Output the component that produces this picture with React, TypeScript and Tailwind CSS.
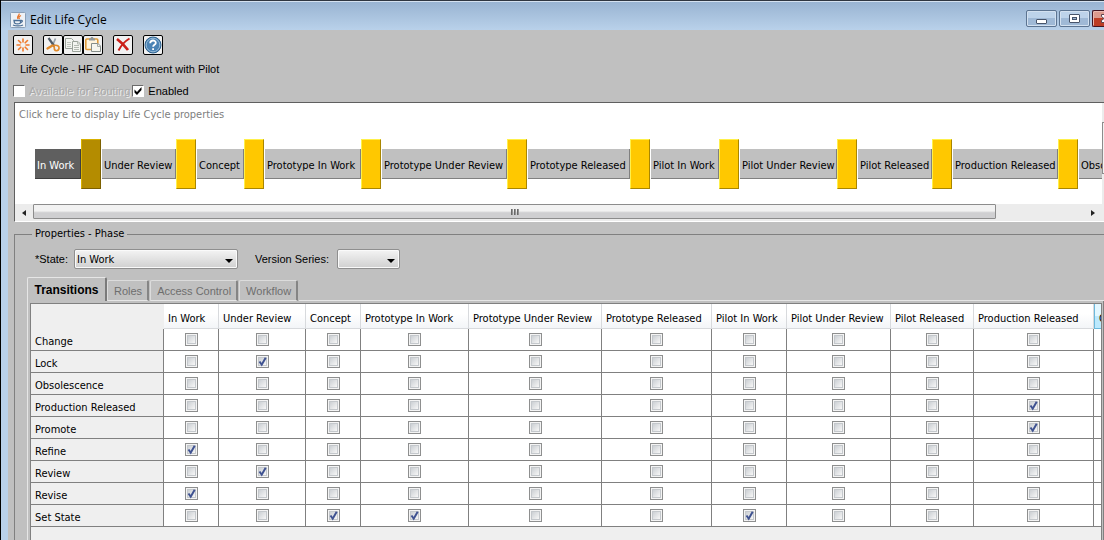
import { useState } from 'react'
import type { ReactNode } from 'react'

const phases = [
  { name: 'In Work', box: 'w-[46px]', col: 'w-[55px]' },
  { name: 'Under Review', box: 'w-[74px]', col: 'w-[87px]' },
  { name: 'Concept', box: 'w-[47px]', col: 'w-[55px]' },
  { name: 'Prototype In Work', box: 'w-[96px]', col: 'w-[108px]' },
  { name: 'Prototype Under Review', box: 'w-[125px]', col: 'w-[133px]' },
  { name: 'Prototype Released', box: 'w-[102px]', col: 'w-[110px]' },
  { name: 'Pilot In Work', box: 'w-[68px]', col: 'w-[75px]' },
  { name: 'Pilot Under Review', box: 'w-[97px]', col: 'w-[104px]' },
  { name: 'Pilot Released', box: 'w-[74px]', col: 'w-[83px]' },
  { name: 'Production Released', box: 'w-[105px]', col: 'w-[120px]' },
  { name: 'Obsolescence', box: 'w-[80px]', col: 'w-[90px]' },
]

const transitions: { name: string; to: string[] }[] = [
  { name: 'Change', to: [] },
  { name: 'Lock', to: ['Under Review'] },
  { name: 'Obsolescence', to: [] },
  { name: 'Production Released', to: ['Production Released'] },
  { name: 'Promote', to: ['Production Released'] },
  { name: 'Refine', to: ['In Work'] },
  { name: 'Review', to: ['Under Review'] },
  { name: 'Revise', to: ['In Work'] },
  { name: 'Set State', to: ['Concept', 'Prototype In Work', 'Pilot In Work'] },
]

const tabs = ['Transitions', 'Roles', 'Access Control', 'Workflow']

function JavaIcon() {
  return (
    <svg width="16" height="16" viewBox="0 0 16 16" fill="none">
      <rect x="0.5" y="0.5" width="15" height="15" rx="1" fill="#eef2f6" stroke="#8aa0b8" />
      <path d="M9 1.500c1.200 2-3 2.800-1.200 5.500M11 3.500c-2.200 1-2.700 2-1.500 3.500" stroke="#e8772e" strokeWidth="1.300" />
      <path d="M4 8.500h6.500v2.500c-1.500 1-4.500 1-6 0zM10.500 8.500c3-.5 2 2.200-.5 2.200M3 13c2.500 1.200 7.500 1.200 10 0" stroke="#4b6f96" strokeWidth="1.300" />
    </svg>
  )
}

function NewIcon() {
  return (
    <svg width="18" height="18" viewBox="0 0 18 18" stroke="#f07b2c" strokeWidth="1.600" strokeLinecap="round">
      <path d="M9 3v3M9 12v3M3 9h3M12 9h3M4.500 4.500l2.300 2.300M11.200 11.200l2.300 2.300M4.500 13.500l2.300-2.300M11.200 6.800l2.300-2.300" />
    </svg>
  )
}

function CutIcon() {
  return (
    <svg width="18" height="18" viewBox="0 0 18 18" fill="none">
      <path d="M11.500 2.500L8.500 9.500" stroke="#9aa5ae" strokeWidth="1.800" />
      <path d="M4.500 2l6 8.500" stroke="#4f5c69" strokeWidth="2.200" />
      <path d="M8.500 9.500l-5 3" stroke="#e08a2c" strokeWidth="2.400" strokeLinecap="round" />
      <path d="M10 9.500c3-.8 5.500.5 5 3s-3.500 3-4.500 1z" stroke="#e08a2c" strokeWidth="1.700" />
    </svg>
  )
}

function CopyIcon() {
  return (
    <svg width="18" height="18" viewBox="0 0 18 18" stroke="#9aa29a">
      <path d="M1.500 2.500h6l2 2v8h-8z" fill="#f3f5f1" />
      <path d="M3 6.500h4M3 8.500h4M3 10.500h4" stroke="#c0c6be" />
      <path d="M8.500 5.500h5.500l2.500 2.500v7.500h-8z" fill="#f3f5f1" />
      <path d="M13.500 5.500v2.500h3M10 9.500h5M10 11.500h5M10 13.500h5" stroke="#b4bab2" fill="none" />
    </svg>
  )
}

function PasteIcon() {
  return (
    <svg width="18" height="18" viewBox="0 0 18 18">
      <rect x="1.800" y="3" width="12" height="10.500" rx="1" fill="#fff4dc" stroke="#df9a38" strokeWidth="1.600" />
      <path d="M5 4.500v-2h1.500l.5-1.500h2l.5 1.500h1.500v2z" fill="#8f979c" />
      <path d="M7.500 7.500h6.500l2.500 2.500v5.500h-9z" fill="#f6f6ee" stroke="#858d89" />
      <path d="M13.500 7.500v3h3" fill="none" stroke="#a5aba5" />
    </svg>
  )
}

function DeleteIcon() {
  return (
    <svg width="18" height="18" viewBox="0 0 18 18" fill="none" stroke="#cb1f18">
      <path d="M3 3c4 3 7.500 6.500 11 11" strokeWidth="2.800" />
      <path d="M15.500 2.500c-5 3-8.500 7-11 12" strokeWidth="2" />
    </svg>
  )
}

function HelpIcon() {
  return (
    <svg width="18" height="18" viewBox="0 0 18 18" fill="none">
      <circle cx="9" cy="9" r="8" fill="#4a83b5" stroke="#2f638f" />
      <circle cx="9" cy="9" r="6.800" stroke="#a9c6de" strokeWidth="0.800" />
      <path d="M6.200 7.200c.1-3.600 5.600-3.500 5.600-.3 0 1.900-2.700 1.900-2.700 3.900M9.100 12.200v1.900" stroke="#fff" strokeWidth="1.800" />
    </svg>
  )
}

function ToolButton({ label, children }: { label: string; children: ReactNode }) {
  return (
    <button
      type="button"
      aria-label={label}
      title={label}
      className="flex size-5 items-center justify-center overflow-hidden rounded-[2px] border border-black bg-[#f1f1f1]"
    >
      {children}
    </button>
  )
}

function CaptionButton({ label, children }: { label: string; children: ReactNode }) {
  return (
    <button
      type="button"
      aria-label={label}
      className="flex h-[17px] w-[31px] items-center justify-center rounded-[2px] border border-[#5c7491] bg-linear-to-b from-[#bdd3ea] from-50% to-[#9fb9d6] to-50% shadow-[inset_0_0_0_1px_#d3e1f0]"
    >
      {children}
    </button>
  )
}

function TitleBar() {
  return (
    <header className="flex h-[30px] justify-between border-t border-[#2f3640] bg-linear-to-b from-[#98b3d1] to-[#b9d1ea] shadow-[inset_0_1px_0_#d5e2f0]">
      <div className="flex items-center gap-1 pt-2 pl-[9px]">
        <JavaIcon />
        <h1 className="font-['Open_Sans','Noto_Sans',sans-serif] text-[12px] leading-4 text-black">Edit Life Cycle</h1>
      </div>
      <div className="flex gap-[2px] pt-[9px]">
        <CaptionButton label="Minimize">
          <svg width="12" height="6" viewBox="0 0 12 6" className="mt-1">
            <rect x="0.5" y="1.500" width="10" height="4" rx="0.500" fill="#fff" stroke="#47546a" />
          </svg>
        </CaptionButton>
        <CaptionButton label="Maximize">
          <svg width="11" height="9" viewBox="0 0 11 9">
            <rect x="0.500" y="0.500" width="10" height="8" rx="0.500" fill="#fff" stroke="#47546a" />
            <rect x="3.500" y="3.500" width="4" height="2" fill="#9db6d2" stroke="#47546a" />
          </svg>
        </CaptionButton>
        <button
          type="button"
          aria-label="Close"
          className="flex h-[17px] w-3 items-center justify-end overflow-hidden rounded-l-[2px] border border-r-0 border-[#431422] bg-linear-to-b from-[#dc9a8e] from-50% to-[#bd3d25] to-50% shadow-[inset_1px_1px_0_#e9b9b0]"
        >
          <svg width="3" height="9" viewBox="0 0 3 9" className="flex-none">
            <path d="M3 .5h-2.500v2l2.500 2M3 8.500h-2.500v-2l2.500-2" fill="#fff" stroke="#5b4350" />
          </svg>
        </button>
      </div>
    </header>
  )
}

function ClassicCheckbox({
  label,
  checked,
  disabled,
  onChange,
}: {
  label: string
  checked: boolean
  disabled?: boolean
  onChange: () => void
}) {
  return (
    <label className="flex items-center gap-1">
      <span className="grid">
        <input
          type="checkbox"
          checked={checked}
          disabled={disabled}
          onChange={onChange}
          className="col-start-1 row-start-1 size-3 appearance-none border border-t-[#6b6b6b] border-r-white border-b-white border-l-[#6b6b6b] bg-white"
        />
        {checked && (
          <svg width="12" height="12" viewBox="0 0 12 12" className="pointer-events-none col-start-1 row-start-1">
            <path d="M2.500 4.500v3l2.500 2.500 4.500-5v-3l-4.500 5z" fill="#000" />
          </svg>
        )}
      </span>
      <span className={disabled ? 'text-[#a9a9a9] [text-shadow:1px_1px_0_#ececec]' : 'text-black'}>{label}</span>
    </label>
  )
}

function GridCheckbox({ label, checked, onChange }: { label: string; checked: boolean; onChange: () => void }) {
  return (
    <span className="grid justify-center">
      <input
        type="checkbox"
        aria-label={label}
        checked={checked}
        onChange={onChange}
        className="col-start-1 row-start-1 size-[13px] appearance-none border border-[#8e8f8f] bg-linear-to-br from-[#cdd1d5] from-20% to-[#f6f6f6] to-80% shadow-[inset_0_0_0_1px_#f4f4f4,inset_0_0_0_2px_#c4c8cc]"
      />
      {checked && (
        <svg width="13" height="13" viewBox="0 0 13 13" className="pointer-events-none col-start-1 row-start-1">
          <path d="M3.500 6.500l2.200 3.200 4-7" fill="none" stroke="#3f5291" strokeWidth="2" />
        </svg>
      )}
    </span>
  )
}

function DropDown({ id, className, children }: { id: string; className: string; children: ReactNode }) {
  return (
    <span className={`grid items-center ${className}`}>
      <select
        id={id}
        className="col-start-1 row-start-1 h-5 w-full appearance-none rounded-[2px] border border-[#8f8f8f] bg-linear-to-b from-[#f4f4f4] to-[#d0d0d0] pt-[2px] pl-[2px] font-['DejaVu_Sans_Condensed','DejaVu_Sans',sans-serif] text-[11px] leading-4 shadow-[inset_0_0_0_1px_#fafafa]"
      >
        {children}
      </select>
      <svg
        width="8"
        height="4"
        viewBox="0 0 8 4"
        className="pointer-events-none col-start-1 row-start-1 mt-1 mr-[5px] justify-self-end"
      >
        <path d="M0 0h8L4 4z" fill="#000" />
      </svg>
    </span>
  )
}

function PhaseStrip({ selected, onSelect }: { selected: string; onSelect: (name: string) => void }) {
  return (
    <div className="flex items-center pl-5">
      {phases.map((phase) => {
        const active = phase.name === selected
        return (
          <div key={phase.name} className="flex flex-none items-center">
            <button
              type="button"
              onClick={() => onSelect(phase.name)}
              className={`h-[30px] border-r border-b pt-1 pl-[2px] text-left whitespace-nowrap ${phase.box} ${
                active ? 'border-[#3f3f3f] bg-[#5f5f5f] text-white' : 'border-[#808080] bg-[#c0c0c0] text-black'
              }`}
            >
              {phase.name}
            </button>
            <span
              className={`mr-px h-[50px] w-5 border ${
                active
                  ? 'border-t-[#d8b000] border-r-[#7c6000] border-b-[#7c6000] border-l-[#d8b000] bg-[#b48c00]'
                  : 'border-t-[#fff04a] border-r-[#a98600] border-b-[#a98600] border-l-[#fff04a] bg-[#ffc800]'
              }`}
            />
          </div>
        )
      })}
    </div>
  )
}

function LifeCyclePanel() {
  const [selected, setSelected] = useState('In Work')
  return (
    <section className="ml-[6px] flex border-t border-b border-l border-[#5f5f5f] border-b-white bg-white">
      <div className="min-w-0 flex-1 overflow-hidden">
        <p className="px-1 pt-1 leading-4 text-[#808080]">Click here to display Life Cycle properties</p>
        <div className="overflow-hidden pt-4 pb-[15px]">
          <PhaseStrip selected={selected} onSelect={setSelected} />
        </div>
        <div className="flex h-[17px] bg-[#ececec]">
          <button type="button" aria-label="Scroll left" className="flex w-[18px] items-center justify-center">
            <svg width="4" height="6" viewBox="0 0 4 6">
              <path d="M4 0v6L0 3z" fill="#222" />
            </svg>
          </button>
          <div className="flex h-[15px] flex-1">
            <div className="flex w-11/12 items-center justify-center gap-px rounded-[1px] border border-[#8c8c8c] bg-linear-to-b from-[#f2f2f2] from-45% to-[#cfcfd1] to-60%">
              <span className="h-[6px] w-[2px] bg-linear-to-r from-[#555] to-[#aaa]" />
              <span className="h-[6px] w-[2px] bg-linear-to-r from-[#555] to-[#aaa]" />
              <span className="h-[6px] w-[2px] bg-linear-to-r from-[#555] to-[#aaa]" />
            </div>
          </div>
          <button type="button" aria-label="Scroll right" className="flex w-[18px] items-center justify-center">
            <svg width="4" height="6" viewBox="0 0 4 6">
              <path d="M0 0v6l4-3z" fill="#222" />
            </svg>
          </button>
        </div>
      </div>
      <div className="w-[2px] bg-[#ececec] pt-[19px] pb-[47px]">
        <div className="h-full border border-r-0 border-[#8c8c8c] bg-[#f2f2f2]" />
      </div>
    </section>
  )
}

function TransitionTable() {
  const [grid, setGrid] = useState(() => transitions.map((t) => phases.map((p) => t.to.includes(p.name))))

  function toggle(row: number, col: number) {
    setGrid(grid.map((cells, r) => (r === row ? cells.map((v, c) => (c === col ? !v : v)) : cells)))
  }

  return (
    <table className="w-max table-fixed border-separate border-spacing-0">
      <thead>
        <tr className="h-[25px]">
          <th className="w-[133px] bg-[#efefef]" />
          {phases.map((phase) => (
            <th
              key={phase.name}
              scope="col"
              className={`border-r border-b pt-[6px] pb-0 pl-1 text-left font-normal whitespace-nowrap ${phase.col} ${
                phase.name === 'Obsolescence'
                  ? 'border-l border-[#6cb9dc] bg-linear-to-b from-[#e3f7ff] from-50% to-[#bce9fd] to-50%'
                  : 'border-[#d8dadd] bg-linear-to-b from-white from-40% to-[#f3f5f8]'
              }`}
            >
              {phase.name}
            </th>
          ))}
        </tr>
      </thead>
      <tbody>
        {transitions.map((transition, row) => (
          <tr key={transition.name} className="h-[22px]">
            <th
              scope="row"
              className="border-r border-b border-[#808080] bg-[#efefef] p-0 pt-1 pl-1 text-left font-normal whitespace-nowrap"
            >
              {transition.name}
            </th>
            {phases.map((phase, col) => (
              <td key={phase.name} className="border-r border-b border-[#808080] bg-white p-0">
                <GridCheckbox
                  label={`${transition.name} from ${phase.name}`}
                  checked={grid[row][col]}
                  onChange={() => toggle(row, col)}
                />
              </td>
            ))}
          </tr>
        ))}
      </tbody>
    </table>
  )
}

function PropertiesPanel() {
  const [tab, setTab] = useState('Transitions')
  return (
    <section aria-labelledby="properties-title" className="ml-[6px] flex min-w-0 flex-1 flex-col pt-1">
      <div className="flex h-4 items-center">
        <span className="h-px w-[18px] bg-[#808080]" />
        <h2 id="properties-title" className="px-[3px]">
          Properties - Phase
        </h2>
        <span className="h-px flex-1 bg-[#808080]" />
      </div>
      <div className="-mt-2 flex min-w-0 flex-1 flex-col border-l border-[#808080] pt-[15px] pl-3">
        <div className="flex h-5 items-center pl-2 font-['Liberation_Sans',Arial,sans-serif]">
          <label htmlFor="state" className="w-[39px]">
            *State:
          </label>
          <DropDown id="state" className="w-[164px]">
            {phases.map((phase) => (
              <option key={phase.name}>{phase.name}</option>
            ))}
          </DropDown>
          <label htmlFor="version-series" className="ml-[17px] w-[82px]">
            Version Series:
          </label>
          <DropDown id="version-series" className="w-[63px]">
            <option> </option>
          </DropDown>
        </div>
        <div role="tablist" className="mt-2 flex items-end font-['Liberation_Sans',Arial,sans-serif]">
          {tabs.map((name) => (
            <button
              key={name}
              type="button"
              role="tab"
              aria-selected={name === tab}
              onClick={() => setTab(name)}
              className={
                name === tab
                  ? 'h-6 w-20 rounded-t-[2px] border-t border-r-2 border-l border-t-[#e6e6e6] border-r-[#7a7a7a] border-l-[#e6e6e6] text-[12px] font-bold text-black'
                  : 'mr-px h-[21px] rounded-t-[2px] border-t border-r-2 border-b border-l border-t-[#dcdcdc] border-r-[#858585] border-b-[#e6e6e6] border-l-[#dcdcdc] pr-[5px] pl-[6px] text-[#6e6e6e]'
              }
            >
              {name}
            </button>
          ))}
          <span className="flex-1 border-b border-[#e6e6e6]" />
        </div>
        <div className="flex min-w-0 flex-1 border-r border-l border-r-[#808080] border-l-[#e6e6e6] pt-[2px] pr-px pl-[2px]">
          <div className="min-w-0 flex-1 overflow-hidden border border-b-0 border-[#808080] bg-[#efefef]">
            <TransitionTable />
          </div>
        </div>
      </div>
    </section>
  )
}

export default function App() {
  const [enabled, setEnabled] = useState(true)
  return (
    <div className="flex min-h-screen flex-col border-l border-black bg-[#b9d1ea] font-['DejaVu_Sans_Condensed','DejaVu_Sans',sans-serif] text-[11px] leading-4 text-black">
      <TitleBar />
      <main className="ml-[7px] flex flex-1 flex-col bg-[#c0c0c0]">
        <div className="flex gap-[10px] pt-[5px] pl-[5px]">
          <ToolButton label="New">
            <NewIcon />
          </ToolButton>
          <div className="flex">
            <ToolButton label="Cut">
              <CutIcon />
            </ToolButton>
            <ToolButton label="Copy">
              <CopyIcon />
            </ToolButton>
            <ToolButton label="Paste">
              <PasteIcon />
            </ToolButton>
          </div>
          <ToolButton label="Delete">
            <DeleteIcon />
          </ToolButton>
          <ToolButton label="Help">
            <HelpIcon />
          </ToolButton>
        </div>
        <div className="font-['Liberation_Sans',Arial,sans-serif]">
          <h2 className="pt-[6px] pl-3">Life Cycle - HF CAD Document with Pilot</h2>
          <div className="flex gap-[2px] pt-[6px] pb-[3px] pl-[5px]">
            <ClassicCheckbox label="Available for Routing" checked={false} disabled onChange={() => {}} />
            <ClassicCheckbox label="Enabled" checked={enabled} onChange={() => setEnabled(!enabled)} />
          </div>
        </div>
        <LifeCyclePanel />
        <PropertiesPanel />
      </main>
    </div>
  )
}
